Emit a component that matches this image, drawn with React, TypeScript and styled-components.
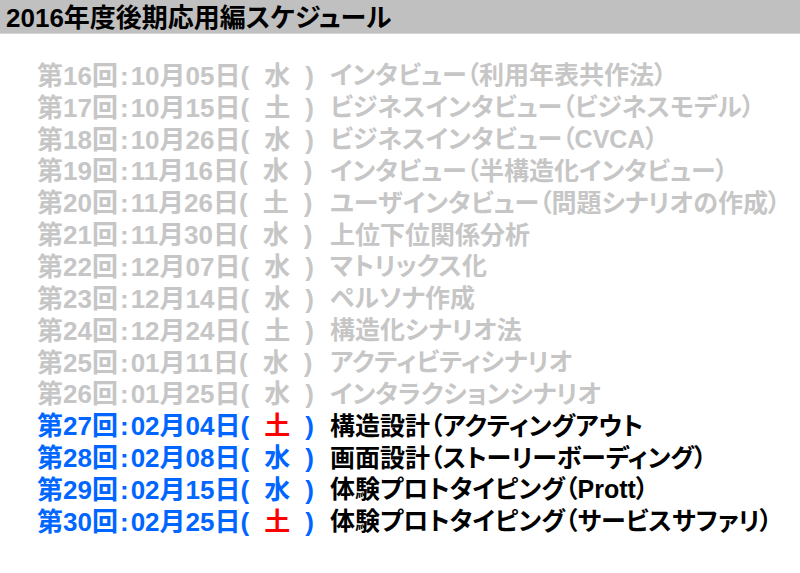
import styled, { createGlobalStyle } from "styled-components";

const GlobalStyle = createGlobalStyle`
  body {
    margin: 0;
    background: #ffffff;
    font-family: "Liberation Sans", "Noto Sans CJK JP", sans-serif;
  }
`;

type Lesson = {
  no: number;
  date: string;
  day: "水" | "土";
  title: string;
};

const lessons: Lesson[] = [
  { no: 16, date: "10月05日", day: "水", title: "インタビュー（利用年表共作法）" },
  { no: 17, date: "10月15日", day: "土", title: "ビジネスインタビュー（ビジネスモデル）" },
  { no: 18, date: "10月26日", day: "水", title: "ビジネスインタビュー（CVCA）" },
  { no: 19, date: "11月16日", day: "水", title: "インタビュー（半構造化インタビュー）" },
  { no: 20, date: "11月26日", day: "土", title: "ユーザインタビュー（問題シナリオの作成）" },
  { no: 21, date: "11月30日", day: "水", title: "上位下位関係分析" },
  { no: 22, date: "12月07日", day: "水", title: "マトリックス化" },
  { no: 23, date: "12月14日", day: "水", title: "ペルソナ作成" },
  { no: 24, date: "12月24日", day: "土", title: "構造化シナリオ法" },
  { no: 25, date: "01月11日", day: "水", title: "アクティビティシナリオ" },
  { no: 26, date: "01月25日", day: "水", title: "インタラクションシナリオ" },
  { no: 27, date: "02月04日", day: "土", title: "構造設計（アクティングアウト" },
  { no: 28, date: "02月08日", day: "水", title: "画面設計（ストーリーボーディング）" },
  { no: 29, date: "02月15日", day: "水", title: "体験プロトタイピング（Prott）" },
  { no: 30, date: "02月25日", day: "土", title: "体験プロトタイピング（サービスサファリ）" },
];

const Header = styled.header`
  height: 33px;
  background: #c0c0c0;
  border-bottom: 1px solid #d4d4d4;
  display: flex;
  align-items: center;
  padding-left: 6px;
`;

const Title = styled.h1`
  margin: 0;
  font-size: 26px;
  font-weight: 700;
  color: #000000;
  line-height: 1;
  padding-top: 3px;
  font-feature-settings: "palt";
`;

const List = styled.ul`
  list-style: none;
  margin: 0;
  padding: 26px 0 0 37px;
`;

const Row = styled.li<{ $done: boolean }>`
  display: grid;
  grid-template-columns: 293px auto;
  align-items: center;
  height: 31.85px;
  line-height: 1;
  font-weight: 700;
  white-space: nowrap;
  color: ${({ $done }) => ($done ? "#c6c6c6" : "#000000")};
`;

const When = styled.span<{ $done: boolean }>`
  font-size: 26px;
  color: ${({ $done }) => ($done ? "#c6c6c6" : "#0066ff")};
`;

const Colon = styled.span`
  margin: 0 2px;
`;

const Day = styled.span<{ $done: boolean; $sat: boolean }>`
  margin: 0 15px;
  color: ${({ $done, $sat }) =>
    $done ? "#c6c6c6" : $sat ? "#ff0000" : "#0066ff"};
`;

const Topic = styled.span`
  font-size: 25px;
  font-feature-settings: "palt";
`;

export default function App() {
  return (
    <>
      <GlobalStyle />
      <Header>
        <Title>2016年度後期応用編スケジュール</Title>
      </Header>
      <List>
        {lessons.map((l) => {
          const done = l.no <= 26;
          return (
            <Row key={l.no} $done={done}>
              <When $done={done}>
                第{l.no}回<Colon>:</Colon>
                {l.date}(
                <Day $done={done} $sat={l.day === "土"}>
                  {l.day}
                </Day>
                )
              </When>
              <Topic>{l.title}</Topic>
            </Row>
          );
        })}
      </List>
    </>
  );
}
